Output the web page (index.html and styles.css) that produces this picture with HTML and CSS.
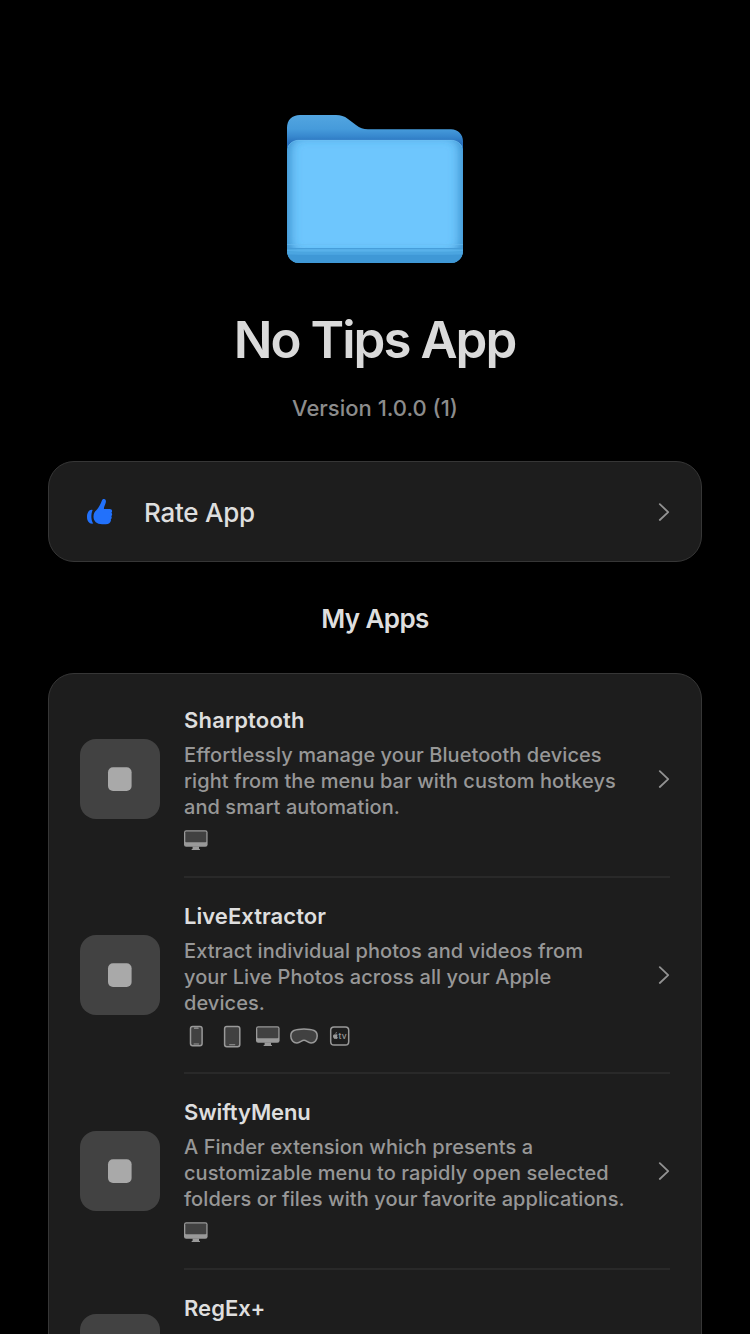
FILE: index.html
```html
<!DOCTYPE html>
<html lang="en">
<head>
<meta charset="utf-8">
<title>No Tips App</title>
<link rel="stylesheet" href="styles.css">
</head>
<body>
<svg class="defs" width="0" height="0" aria-hidden="true">
  <symbol id="chevron" viewBox="0 0 12 18"><path d="M1.800 1.200 10.200 9.100 1.800 17" fill="none" stroke="#929292" stroke-width="1.800" stroke-linecap="round" stroke-linejoin="round"/></symbol>
  <symbol id="placeholder" viewBox="0 0 80 80"><rect x="28" y="28.300" width="23.600" height="23.600" rx="5" fill="#a9a9a9"/></symbol>
  <symbol id="mac" viewBox="0 0 24 24">
    <rect x="0" y="2.200" width="23.600" height="16.500" rx="2.200" fill="#999"/>
    <rect x="1.300" y="3.500" width="21" height="10.800" rx=".8" fill="#414141"/>
    <path d="M8.600 18.500h6.400v2.300l1 .5v.6H7.600v-.6l1-.5z" fill="#999"/>
  </symbol>
  <symbol id="phone" viewBox="0 0 24 24">
    <rect x="6.500" y="2.500" width="11.600" height="19.200" rx="2.200" fill="#414141" stroke="#999" stroke-width="1.500"/>
    <path d="M10.500 4.200h3.600M10 20h4.600" stroke="#999" stroke-width="1.200" stroke-linecap="round"/>
  </symbol>
  <symbol id="pad" viewBox="0 0 24 24">
    <rect x="4.600" y="2.500" width="15.200" height="20.200" rx="2.200" fill="#414141" stroke="#999" stroke-width="1.500"/>
    <path d="M9.600 20.800h5.200" stroke="#999" stroke-width="1.100" stroke-linecap="round"/>
  </symbol>
  <symbol id="vision" viewBox="0 0 28 24">
    <path d="M14 4.900c4.200 0 7.600.5 10 1.600 2.200 1 3.200 3 3.200 5.500 0 4-2.500 7-6.100 7-3.400 0-4.600-2.700-7.100-2.700s-3.700 2.700-7.100 2.700C3.300 19 .8 16 .8 12 .8 9.500 1.800 7.500 4 6.500c2.400-1.100 5.800-1.600 10-1.600z" fill="#414141" stroke="#999" stroke-width="1.500"/>
  </symbol>
</svg>
<main class="screen">
  <svg class="folder" viewBox="0 0 200 175" width="200" height="175">
    <defs>
      <linearGradient id="back" gradientUnits="userSpaceOnUse" x1="0" y1="15" x2="0" y2="43"><stop offset="0" stop-color="#52a5e0"/><stop offset=".5" stop-color="#469bdb"/><stop offset=".75" stop-color="#3889cf"/><stop offset="1" stop-color="#2871bd"/></linearGradient>
      <clipPath id="front"><path d="M12 52c0-7 5-12 12-12h152c7 0 12 5 12 12v98c0 8-5 13-13 13H25c-8 0-13-5-13-13z"/></clipPath>
      <filter id="soft" x="-20%" y="-20%" width="140%" height="140%"><feGaussianBlur stdDeviation="6"/></filter>
    </defs>
    <path d="M12 56V28c0-8 5-13 13-13h36c5 0 8 1 12 4l8 6c4 3 7 4.300 12 4.300h83c7 0 12 5 12 12V60H12z" fill="url(#back)"/>
    <g clip-path="url(#front)">
      <rect x="12" y="40" width="176" height="123" fill="#6ec6fd"/>
      <rect x="8" y="29" width="184" height="133" rx="20" fill="none" stroke="#2f84c2" stroke-width="12" filter="url(#soft)"/>
      <path d="M12 144h176v1H12z" fill="#6abdf2" opacity=".5"/>
      <path d="M12 148h176v1.500H12z" fill="#449ad6" opacity=".9"/>
      <path d="M12 149.500h176v2H12z" fill="#58b0e9" opacity=".9"/>
      <path d="M12 151.500h176v3.300H12z" fill="#4ba5e0"/>
      <path d="M12 154.800h176V163H12z" fill="#3f98d6"/>
    </g>
    <path d="M13 47c2-4.500 6-6.700 11-6.700h152c5 0 9 2.200 11 6.700" fill="none" stroke="#7bc8f5" stroke-opacity=".6" stroke-width=".7"/>
  </svg>
  <h1 class="title">No Tips App</h1>
  <p class="version">Version 1.0.0 (1)</p>

  <section class="card rate">
    <svg class="thumb" viewBox="0 0 28 28">
      <path d="M6.600 12C3.500 11 1 14.500 1 19s2.600 7.300 6.300 6.500C5 22.200 4.800 16.500 6.600 12z" fill="#2271fb"/>
      <path d="M7.500 18.800c0-3.200 1.200-4.900 3-6.700 2.300-2.400 3.900-5.800 5.200-9.100.6-1.700 1.400-2.100 2.500-1.900 1.600.3 2 1.800 1.600 3.300-.6 2.300-1.900 4.300-1.900 6 0 .6.300.7.900.7h5c1.300 0 2.300.8 2.300 1.900 0 .7-.2 1.300-.7 1.700.5.400.8 1 .8 1.600 0 .8-.4 1.500-.9 1.900.3.500.5 1 .4 1.500-.1.700-.4 1.200-.9 1.600.2.500.2 1 .1 1.500-.4 1.800-2.100 3.500-5.200 3.500h-3.600c-5.300 0-8.600-3-8.600-7.500z" fill="#2271fb"/>
    </svg>
    <span class="rate-label">Rate App</span>
    <svg class="chevron"><use href="#chevron"/></svg>
  </section>

  <h2 class="heading">My Apps</h2>

  <section class="card apps">
    <article class="app">
      <svg class="app-icon"><use href="#placeholder"/></svg>
      <div class="info">
        <h3 class="name loose">Sharptooth</h3>
        <p class="desc">Effortlessly manage your Bluetooth devices<br>right from the menu bar with custom hotkeys<br>and smart automation.</p>
        <div class="platforms"><svg><use href="#mac"/></svg></div>
      </div>
      <svg class="chevron"><use href="#chevron"/></svg>
    </article>
    <article class="app">
      <svg class="app-icon"><use href="#placeholder"/></svg>
      <div class="info">
        <h3 class="name">LiveExtractor</h3>
        <p class="desc">Extract individual photos and videos from<br>your Live Photos across all your Apple<br>devices.</p>
        <div class="platforms"><svg><use href="#phone"/></svg><svg><use href="#pad"/></svg><svg><use href="#mac"/></svg><svg class="wide"><use href="#vision"/></svg><svg viewBox="0 0 24 24">
          <rect x="2.700" y="3" width="18" height="18" rx="3.300" fill="none" stroke="#999" stroke-width="1.500"/>
          <path d="M7.500 9.900c-.2-.9.400-1.700 1.300-1.900.1.900-.5 1.700-1.300 1.900zM7.600 10.500c.6-.3 1.500-.4 2.100.4-.9.600-.8 2 .2 2.500-.4 1-1 1.700-1.500 1.500-.5-.2-.8-.2-1.200 0-.9.300-2.200-1.300-2.200-2.700 0-1.500 1.600-2.300 2.600-1.700z" fill="#999"/>
          <text x="10.600" y="14.900" class="tv-text">tv</text>
        </svg></div>
      </div>
      <svg class="chevron"><use href="#chevron"/></svg>
    </article>
    <article class="app">
      <svg class="app-icon"><use href="#placeholder"/></svg>
      <div class="info">
        <h3 class="name tight">SwiftyMenu</h3>
        <p class="desc">A Finder extension which presents a<br>customizable menu to rapidly open selected<br>folders or files with your favorite applications.</p>
        <div class="platforms"><svg><use href="#mac"/></svg></div>
      </div>
      <svg class="chevron"><use href="#chevron"/></svg>
    </article>
    <article class="app app-short">
      <svg class="app-icon"><use href="#placeholder"/></svg>
      <div class="info">
        <h3 class="name">RegEx+</h3>
      </div>
    </article>
  </section>
</main>
</body>
</html>
```
FILE: styles.css
```css
* { box-sizing: border-box; margin: 0; padding: 0; }
html, body { height: 100%; overflow: hidden; background: #000; }
body { font-family: Inter, "Liberation Sans", sans-serif; color: #dedede; }
.defs { display: block; position: absolute; }
.screen { height: 1334px; overflow: hidden; display: flex; flex-direction: column; align-items: center; padding: 100px 48px 0; }
.folder { flex: none; }
.title { flex: none; margin-top: 35px; font-size: 51px; line-height: 60px; font-weight: 560; letter-spacing: -1.950px; padding-right: 1px; color: #dadada; white-space: nowrap; }
.version { flex: none; margin-top: 24px; font-size: 22px; line-height: 28px; font-weight: 500; color: #8c8c8c; white-space: nowrap; }
.card { flex: none; width: 654px; background: #1d1d1d; border: 1px solid #363636; border-radius: 26px; }
.rate { margin-top: 39px; height: 101px; display: flex; align-items: center; padding: 1px 31px 0 37px; }
.thumb { width: 28px; height: 28px; flex: none; }
.rate-label { margin-left: 30px; flex: 1; padding-top: 2px; font-size: 26px; line-height: 32px; font-weight: 500; letter-spacing: -.25px; }
.chevron { width: 12px; height: 18px; flex: none; }
.heading { flex: none; margin-top: 41px; font-size: 26px; line-height: 32px; font-weight: 600; letter-spacing: -.6px; }
.apps { margin-top: 38px; height: 800px; padding: 8px 31px 0; }
.app { display: flex; align-items: center; height: 196px; padding-bottom: 2px; }
.app-short { height: 170px; }
.app-short .info { height: 168px; }
.app-icon { width: 80px; height: 80px; flex: none; border-radius: 16px; background: #424242; }
.info { position: relative; flex: 1; margin-left: 24px; height: 194px; padding-top: 25px; }
.app .info::after { content: ""; position: absolute; left: 0; width: 486px; bottom: -2px; height: 2px; background: #292929; }
.name { font-size: 22px; line-height: 26px; font-weight: 600; letter-spacing: .05px; }
.name.loose { letter-spacing: .2px; }
.name.tight { letter-spacing: -.1px; }
.desc { margin-top: 9px; font-size: 20px; line-height: 26px; font-weight: 500; letter-spacing: .07px; color: #979797; white-space: nowrap; }
.platforms { display: flex; gap: 12px; margin-top: 8px; }
.platforms svg { width: 24px; height: 24px; flex: none; }
.platforms .wide { width: 28px; margin: 0 -2px; }
.tv-text { font: 500 8.500px Inter, sans-serif; fill: #999; }
```
